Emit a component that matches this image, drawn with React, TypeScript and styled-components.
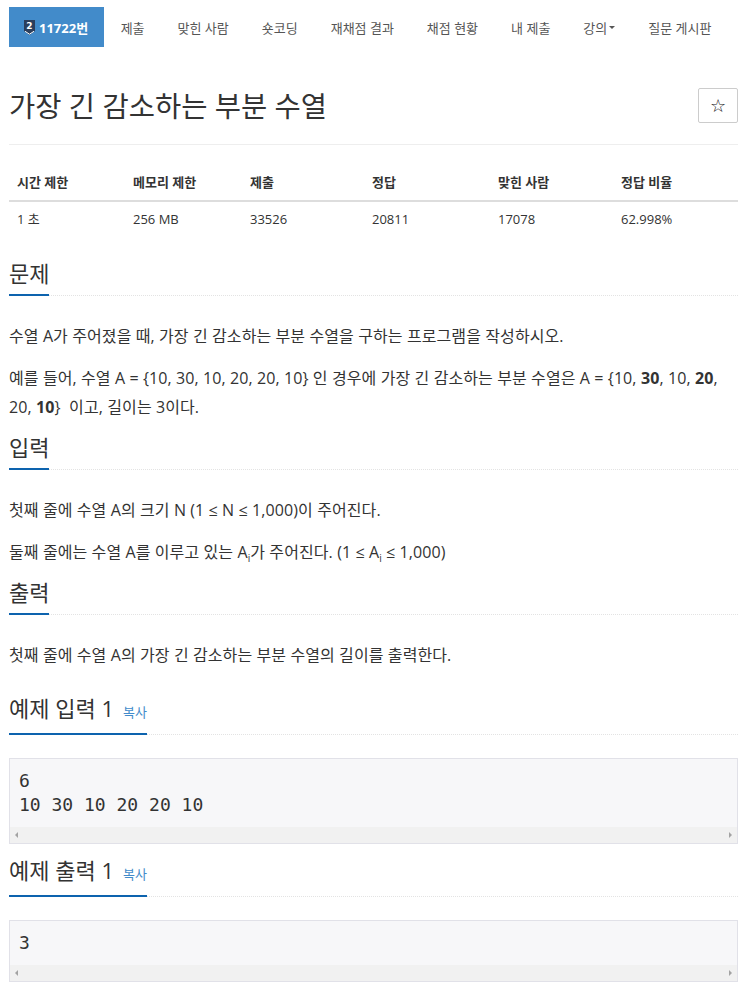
import React from "react";
import styled, { createGlobalStyle } from "styled-components";

const GlobalStyle = createGlobalStyle`
  html, body { margin: 0; padding: 0; background: #fff; }
  body {
    font-family: "Open Sans", "Noto Sans CJK KR", sans-serif;
    color: #333;
  }
  * { box-sizing: border-box; }
`;

const Page = styled.div`
  width: 750px;
  padding: 7px 12px 40px 9px;
`;

const Nav = styled.nav`
  display: flex;
  height: 40px;
`;

const NavItem = styled.a<{ $active?: boolean }>`
  display: flex;
  align-items: center;
  padding: ${(p) => (p.$active ? "0 16px 0 15px" : "0 16.5px")};
  font-size: 13px;
  color: ${(p) => (p.$active ? "#fff" : "#555")};
  background: ${(p) => (p.$active ? "#428bca" : "transparent")};
  font-weight: ${(p) => (p.$active ? 700 : 400)};
  text-decoration: none;
  white-space: nowrap;
`;

const BadgeWrap = styled.span`
  display: inline-flex;
  margin-right: 4px;
`;

const Caret = styled.span`
  display: inline-block;
  width: 0;
  height: 0;
  margin-left: 2px;
  margin-top: 1px;
  border-left: 3.5px solid transparent;
  border-right: 3.5px solid transparent;
  border-top: 3.5px solid #555;
`;

const TitleRow = styled.div`
  display: flex;
  align-items: center;
  justify-content: space-between;
  margin-top: 41px;
  padding-bottom: 21px;
  border-bottom: 1px solid #eee;
`;

const Title = styled.h1`
  margin: 0;
  font-size: 28.5px;
  font-weight: 400;
  line-height: 34px;
  color: #333;
`;

const StarButton = styled.button`
  width: 40px;
  height: 35px;
  border: 1px solid #ccc;
  border-radius: 2px;
  background: #fff;
  font-family: "DejaVu Sans", sans-serif;
  font-size: 18px;
  line-height: 1;
  color: #111;
  padding: 0;
`;

const InfoTable = styled.div`
  display: grid;
  grid-template-columns: 116px 117px 122px 126px 123px 1fr;
  margin-top: 19px;
`;

const HeadCell = styled.div`
  padding: 8px;
  line-height: 20px;
  font-size: 13px;
  font-weight: 700;
  border-bottom: 2px solid #ddd;
`;

const Cell = styled.div`
  padding: 7px 8px 9px;
  line-height: 20px;
  font-size: 13px;
`;

const Section = styled.section<{ $gap: number }>`
  margin-top: ${(p) => p.$gap}px;
`;

const Headline = styled.div`
  display: flex;
  border-bottom: 1px dotted #e3e3e3;
`;

const HeadTitle = styled.h2`
  display: flex;
  align-items: baseline;
  gap: 9px;
  margin: 0 0 -1px;
  padding-bottom: 6px;
  font-size: 22px;
  font-weight: 400;
  line-height: 30px;
  color: #333;
  border-bottom: 2px solid #0d63ae;
`;

const CopyLink = styled.a`
  font-size: 13px;
  color: #428bca;
  text-decoration: none;
`;

const Body = styled.div`
  padding-top: 26px;
  display: flex;
  flex-direction: column;
  gap: 13px;
`;

const Para = styled.p`
  margin: 0;
  font-size: 16px;
  line-height: 29px;
  letter-spacing: 0.1px;
`;

const Sub = styled.sub`
  font-size: 10px;
  line-height: 0;
`;

const SampleBox = styled.div`
  margin-top: 23px;
  border: 1px solid #e1e1e8;
  background: #f7f7f9;
`;

const Pre = styled.pre`
  margin: 0;
  padding: 10px 9px;
  font-family: "DejaVu Sans Mono", monospace;
  font-size: 18px;
  line-height: 24px;
  color: #333;
`;

const ScrollTrack = styled.div`
  height: 16px;
  background: #f1f1f1;
  display: flex;
  align-items: center;
  justify-content: space-between;
  padding: 0 5px;
`;

const Arrow = styled.span<{ $dir: "left" | "right" }>`
  width: 0;
  height: 0;
  border-top: 3px solid transparent;
  border-bottom: 3px solid transparent;
  ${(p) =>
    p.$dir === "left"
      ? "border-right: 3px solid #a3a3a3;"
      : "border-left: 3px solid #a3a3a3;"}
`;

const Badge = () => (
  <BadgeWrap>
    <svg width="11" height="15" viewBox="0 0 11 15">
      <path d="M0 0H11V11L5.5 15L0 11Z" fill="#2b3e5c" />
      <path d="M1 11.3L5.5 14.2L10 11.3" stroke="#fff" strokeWidth="1" fill="none" />
      <text
        x="5.5"
        y="9"
        textAnchor="middle"
        fontSize="9"
        fontWeight="700"
        fill="#fff"
        fontFamily="DejaVu Sans, sans-serif"
      >
        2
      </text>
    </svg>
  </BadgeWrap>
);

const navItems = ["제출", "맞힌 사람", "숏코딩", "재채점 결과", "채점 현황", "내 제출"];

const heads = ["시간 제한", "메모리 제한", "제출", "정답", "맞힌 사람", "정답 비율"];
const vals = ["1 초", "256 MB", "33526", "20811", "17078", "62.998%"];

const Sample = ({ text }: { text: string }) => (
  <SampleBox>
    <Pre>{text}</Pre>
    <ScrollTrack>
      <Arrow $dir="left" />
      <Arrow $dir="right" />
    </ScrollTrack>
  </SampleBox>
);

export default function App() {
  return (
    <>
      <GlobalStyle />
      <Page>
        <Nav>
          <NavItem $active>
            <Badge />
            11722번
          </NavItem>
          {navItems.map((n) => (
            <NavItem key={n}>{n}</NavItem>
          ))}
          <NavItem>
            강의
            <Caret />
          </NavItem>
          <NavItem>질문 게시판</NavItem>
        </Nav>

        <TitleRow>
          <Title>가장 긴 감소하는 부분 수열</Title>
          <StarButton>☆</StarButton>
        </TitleRow>

        <InfoTable>
          {heads.map((h) => (
            <HeadCell key={h}>{h}</HeadCell>
          ))}
          {vals.map((v) => (
            <Cell key={v}>{v}</Cell>
          ))}
        </InfoTable>

        <Section $gap={20}>
          <Headline>
            <HeadTitle>문제</HeadTitle>
          </Headline>
          <Body>
            <Para>수열 A가 주어졌을 때, 가장 긴 감소하는 부분 수열을 구하는 프로그램을 작성하시오.</Para>
            <Para>
              예를 들어, 수열 A = {"{"}10, 30, 10, 20, 20, 10{"}"} 인 경우에 가장 긴 감소하는 부분 수열은 A = {"{"}10,{" "}
              <b>30</b>, 10, <b>20</b>,{" "}
              <span>20, </span>
              <b>10</b>
              {"}"}&nbsp; 이고, 길이는 3이다.
            </Para>
          </Body>
        </Section>

        <Section $gap={10}>
          <Headline>
            <HeadTitle>입력</HeadTitle>
          </Headline>
          <Body>
            <Para>첫째 줄에 수열 A의 크기 N (1 ≤ N ≤ 1,000)이 주어진다.</Para>
            <Para>
              둘째 줄에는 수열 A를 이루고 있는 A<Sub>i</Sub>가 주어진다. (1 ≤ A<Sub>i</Sub> ≤ 1,000)
            </Para>
          </Body>
        </Section>

        <Section $gap={10}>
          <Headline>
            <HeadTitle>출력</HeadTitle>
          </Headline>
          <Body>
            <Para>첫째 줄에 수열 A의 가장 긴 감소하는 부분 수열의 길이를 출력한다.</Para>
          </Body>
        </Section>

        <Section $gap={23}>
          <Headline>
            <HeadTitle>
              예제 입력 1 <CopyLink>복사</CopyLink>
            </HeadTitle>
          </Headline>
          <Sample text={"6\n10 30 10 20 20 10"} />
        </Section>

        <Section $gap={11}>
          <Headline>
            <HeadTitle>
              예제 출력 1 <CopyLink>복사</CopyLink>
            </HeadTitle>
          </Headline>
          <Sample text={"3"} />
        </Section>
      </Page>
    </>
  );
}
